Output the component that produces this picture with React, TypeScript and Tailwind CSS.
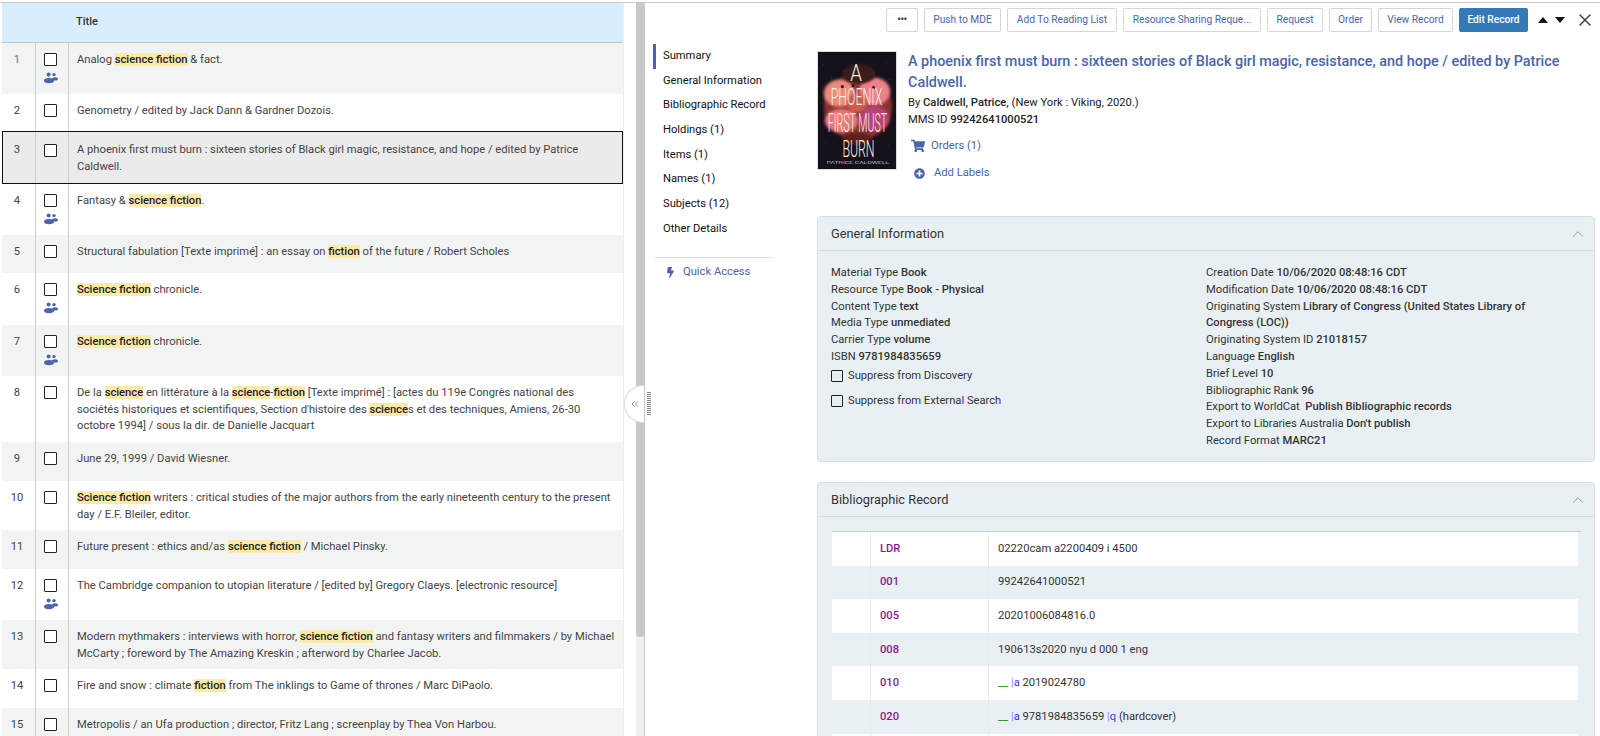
import type { ReactNode } from "react";
import { ChevronUp, ChevronsLeft, X } from "lucide-react";
import { FaBolt, FaPlusCircle, FaShoppingCart } from "react-icons/fa";

function Hl({ children }: { children: ReactNode }) {
  return <span className="bg-[#fbeaa8] font-medium text-[#222]">{children}</span>;
}

function PeopleIcon() {
  return (
    <svg width="14" height="12" viewBox="0 0 14 12" className="text-[#4a65a8]" fill="currentColor">
      <circle cx="4.6" cy="2.6" r="2" />
      <circle cx="10" cy="2.6" r="1.7" />
      <ellipse cx="5" cy="8.6" rx="5" ry="2.7" />
      <ellipse cx="11" cy="6.9" rx="3" ry="1.7" />
    </svg>
  );
}

type Row = { h: string; title: ReactNode; shared?: boolean; selected?: boolean };

const rows: Row[] = [
  { h: "h-[51px]", shared: true, title: <>Analog <Hl>science fiction</Hl> &amp; fact.</> },
  { h: "h-[37px]", title: <>Genometry / edited by Jack Dann &amp; Gardner Dozois.</> },
  { h: "h-[53px]", selected: true, title: <>A phoenix first must burn : sixteen stories of Black girl magic, resistance, and hope / edited by Patrice Caldwell.</> },
  { h: "h-[51px]", shared: true, title: <>Fantasy &amp; <Hl>science fiction</Hl>.</> },
  { h: "h-[38px]", title: <>Structural fabulation [Texte imprimé] : an essay on <Hl>fiction</Hl> of the future / Robert Scholes</> },
  { h: "h-[52px]", shared: true, title: <><Hl>Science fiction</Hl> chronicle.</> },
  { h: "h-[51px]", shared: true, title: <><Hl>Science fiction</Hl> chronicle.</> },
  { h: "h-[66px]", title: <>De la <Hl>science</Hl> en littérature à la <Hl>science</Hl>-<Hl>fiction</Hl> [Texte imprimé] : [actes du 119e Congrès national des sociétés historiques et scientifiques, Section d'histoire des <Hl>science</Hl>s et des techniques, Amiens, 26-30 octobre 1994] / sous la dir. de Danielle Jacquart</> },
  { h: "h-[39px]", title: <>June 29, 1999 / David Wiesner.</> },
  { h: "h-[49px]", title: <><Hl>Science fiction</Hl> writers : critical studies of the major authors from the early nineteenth century to the present day / E.F. Bleiler, editor.</> },
  { h: "h-[39px]", title: <>Future present : ethics and/as <Hl>science fiction</Hl> / Michael Pinsky.</> },
  { h: "h-[51px]", shared: true, title: <>The Cambridge companion to utopian literature / [edited by] Gregory Claeys. [electronic resource]</> },
  { h: "h-[49px]", title: <>Modern mythmakers : interviews with horror, <Hl>science fiction</Hl> and fantasy writers and filmmakers / by Michael McCarty ; foreword by The Amazing Kreskin ; afterword by Charlee Jacob.</> },
  { h: "h-[39px]", title: <>Fire and snow : climate <Hl>fiction</Hl> from The inklings to Game of thrones / Marc DiPaolo.</> },
  { h: "h-[40px]", title: <>Metropolis / an Ufa production ; director, Fritz Lang ; screenplay by Thea Von Harbou.</> },
];

const actions = [
  { label: "Push to MDE", w: "w-[77px]" },
  { label: "Add To Reading List", w: "w-[110px]" },
  { label: "Resource Sharing Reque...", w: "w-[138px]" },
  { label: "Request", w: "w-[56px]" },
  { label: "Order", w: "w-[43px]" },
  { label: "View Record", w: "w-[75px]" },
];

const nav = [
  "Summary",
  "General Information",
  "Bibliographic Record",
  "Holdings (1)",
  "Items (1)",
  "Names (1)",
  "Subjects (12)",
  "Other Details",
];

const generalLeft = [
  ["Material Type", "Book"],
  ["Resource Type", "Book - Physical"],
  ["Content Type", "text"],
  ["Media Type", "unmediated"],
  ["Carrier Type", "volume"],
  ["ISBN", "9781984835659"],
];

const generalRight = [
  ["Creation Date", "10/06/2020 08:48:16 CDT"],
  ["Modification Date", "10/06/2020 08:48:16 CDT"],
  ["Originating System", "Library of Congress (United States Library of Congress (LOC))"],
  ["Originating System ID", "21018157"],
  ["Language", "English"],
  ["Brief Level", "10"],
  ["Bibliographic Rank", "96"],
  ["Export to WorldCat\u00a0", "Publish Bibliographic records"],
  ["Export to Libraries Australia", "Don't publish"],
  ["Record Format", "MARC21"],
];

const Sub = ({ c }: { c: string }) => (
  <span className="text-[#3b3bf0]"><span className="text-[#8d8df5]">|</span>{c}</span>
);

const Ind = () => <span className="text-[#1d8a00]">__</span>;

const marc: { tag: string; value: ReactNode }[] = [
  { tag: "LDR", value: "02220cam a2200409 i 4500" },
  { tag: "001", value: "99242641000521" },
  { tag: "005", value: "20201006084816.0" },
  { tag: "008", value: "190613s2020 nyu d 000 1 eng" },
  { tag: "010", value: <><Ind /> <Sub c="a" /> 2019024780</> },
  { tag: "020", value: <><Ind /> <Sub c="a" /> 9781984835659 <Sub c="q" /> (hardcover)</> },
  { tag: "040", value: "" },
];

function BookCover() {
  return (
    <svg viewBox="0 0 80 119" className="w-[80px] h-[119px] shrink-0 border border-[#ddd] bg-[#14101a]">
      <defs>
        <filter id="soft"><feGaussianBlur stdDeviation="1.8" /></filter>
        <filter id="softer"><feGaussianBlur stdDeviation="1" /></filter>
      </defs>
      <rect width="80" height="119" fill="#15111b" />
      <g fill="#5d5a78">
        <circle cx="6" cy="12" r="0.5" />
        <circle cx="14" cy="26" r="0.5" />
        <circle cx="70" cy="10" r="0.5" />
        <circle cx="74" cy="28" r="0.5" />
        <circle cx="8" cy="92" r="0.5" />
        <circle cx="72" cy="96" r="0.5" />
      </g>
      <ellipse cx="41" cy="56" rx="35" ry="34" fill="#8a3330" filter="url(#soft)" />
      <ellipse cx="22" cy="42" rx="16" ry="14" fill="#f08a78" filter="url(#soft)" />
      <ellipse cx="58" cy="40" rx="16" ry="14" fill="#f0808a" filter="url(#soft)" />
      <ellipse cx="40" cy="52" rx="11" ry="10" fill="#d15a50" filter="url(#soft)" />
      <ellipse cx="24" cy="70" rx="17" ry="12" fill="#e87a78" filter="url(#soft)" />
      <ellipse cx="58" cy="68" rx="15" ry="13" fill="#b8427a" filter="url(#soft)" />
      <ellipse cx="42" cy="22" rx="17" ry="10" fill="#3a1d18" filter="url(#softer)" />
      <ellipse cx="40" cy="88" rx="15" ry="6" fill="#5a2118" filter="url(#soft)" />
      <circle cx="25" cy="35" r="1.6" fill="#1c2030" />
      <circle cx="57" cy="36" r="1.6" fill="#1c2030" />
      <circle cx="36" cy="34" r="1.6" fill="#2a1a20" />
      <g fill="#f8efe9" fontFamily="Roboto, sans-serif" fontWeight="300" textAnchor="middle">
        <text x="39" y="29" fontSize="25" textLength="12" lengthAdjust="spacingAndGlyphs">A</text>
        <text x="39.5" y="54" fontSize="25" textLength="53" lengthAdjust="spacingAndGlyphs">PHOENIX</text>
        <text x="40.5" y="82" fontSize="27" textLength="61" lengthAdjust="spacingAndGlyphs">FIRST MUST</text>
        <text x="41.5" y="107" fontSize="25" textLength="33" lengthAdjust="spacingAndGlyphs">BURN</text>
        <text x="41" y="114.5" fontSize="4.5" textLength="64" lengthAdjust="spacingAndGlyphs">PATRICE CALDWELL</text>
      </g>
    </svg>
  );
}

function ListRow({ row, n }: { row: Row; n: number }) {
  const zebra = n % 2 === 1 ? "bg-[#f2f4f4]" : "bg-white";
  return (
    <div className={`flex shrink-0 text-[11.2px] leading-[16.5px] ${row.h} ${row.selected ? "bg-[#ebebeb] outline-[1.5px] outline-[#111] -outline-offset-[1.5px]" : zebra}`}>
      <div className={`w-[34px] shrink-0 border-r border-[#cfcfcf] text-center pr-[3px] ${row.selected ? "pt-[11px]" : "pt-[9px]"} ${n === 1 ? "text-[#5a7f9a]" : "text-[#444]"}`}>
        {n}
      </div>
      <div className={`w-[33px] shrink-0 border-r border-[#cfcfcf] flex flex-col items-center pr-[3px] ${row.selected ? "pt-[13px]" : "pt-[10px]"}`}>
        <span className="block w-[13px] h-[13px] border border-[#222] rounded-[1px] bg-white" />
        {row.shared && <span className="mt-[6px]"><PeopleIcon /></span>}
      </div>
      <div className={`flex-1 pl-2 pr-2 text-[#444] ${row.selected ? "pt-[11px]" : "pt-[9px]"}`}>{row.title}</div>
    </div>
  );
}

function Panel({ title, children }: { title: string; children: ReactNode }) {
  return (
    <section className="rounded-[4px] border border-[#d7dde0] bg-[#e9f0f3]">
      <header className="h-[34px] flex items-center justify-between px-[13px] border-b border-[#d7dde0] text-[12.8px] text-[#333]">
        {title}
        <ChevronUp size={18} strokeWidth={1} className="text-[#777] mr-[-6px]" />
      </header>
      {children}
    </section>
  );
}

function Field({ label, value }: { label: string; value: string }) {
  return (
    <div>
      {label} <span className="font-[460] text-[#333]">{value}</span>
    </div>
  );
}

function Suppress({ label, className }: { label: string; className: string }) {
  return (
    <div className={`flex items-center gap-[5px] ${className}`}>
      <span className="w-[12px] h-[12px] border border-[#222] rounded-[1px]" />
      {label}
    </div>
  );
}

export default function App() {
  return (
    <div className="relative h-[736px] w-[1600px] overflow-hidden bg-white font-['Roboto',sans-serif]">
      <div className="h-[3px] border-b border-[#c8c8c8]" />
      <div className="flex h-[733px]">
        <div className="ml-[2px] w-[621px] shrink-0 flex flex-col overflow-hidden">
          <div className="h-[40px] shrink-0 bg-[#d9eefc] border-b border-[#c8c8c8] pl-[74px] flex items-center text-[11px] font-medium text-[#333]">
            Title
          </div>
          {rows.map((row, i) => (
            <ListRow key={i} row={row} n={i + 1} />
          ))}
        </div>
        <div className="w-[13px] shrink-0 border-l border-[#eeeeee]" />
        <div className="w-[9px] shrink-0 bg-[#f0f0f0] border-r border-[#c8c8c8] flex flex-col">
          <div className="h-[634px] -mr-px bg-[#c8c8c8] rounded-b-[4px]" />
        </div>

        <div className="flex-1 min-w-0 flex flex-col">
          <div className="h-[29px] shrink-0 pt-[5px] flex items-center justify-end">
            <div className="flex items-center gap-[6px] text-[10.2px] text-[#4a65a8]">
              <button className="w-[32px] h-[24px] rounded-[2px] border border-[#d5d5d5] bg-white text-[#444] font-bold tracking-tighter leading-none">
                •••
              </button>
              {actions.map((a) => (
                <button key={a.label} className={`${a.w} h-[24px] rounded-[2px] border border-[#d5d5d5] bg-white whitespace-nowrap`}>
                  {a.label}
                </button>
              ))}
              <button className="w-[69px] h-[24px] rounded-[2px] bg-[#337ab7] text-white font-medium">Edit Record</button>
            </div>
            <div className="flex items-center gap-[7px] ml-[10px] mr-[10px]">
              <span className="w-0 h-0 border-x-[5px] border-x-transparent border-b-[6px] border-b-[#111]" />
              <span className="w-0 h-0 border-x-[5px] border-x-transparent border-t-[6px] border-t-[#111]" />
            </div>
            <X size={20} strokeWidth={1.8} className="text-[#444] mr-[5px]" />
          </div>

          <div className="flex flex-1 min-h-0">
            <nav className="w-[172px] shrink-0 pl-[8px] pt-[12px] text-[11.2px] text-[#111]">
              {nav.map((item, i) => (
                <div key={item} className={`h-[24.7px] flex items-center pl-[7px] border-l-[3px] ${i === 0 ? "border-[#4a65a8]" : "border-transparent"}`}>
                  {item}
                </div>
              ))}
              <div className="mt-[15.5px] ml-[2px] mr-[45px] border-t border-[#dcdcdc] pt-[3px] flex items-center h-[26px] pl-[10px] text-[#4a65a8]">
                <FaBolt size={11} className="mr-[7px]" />
                Quick Access
              </div>
            </nav>

            <main className="flex-1 min-w-0 pt-[19px] pr-[5px]">
              <div className="flex h-[165px]">
                <BookCover />
                <div className="pl-[11px] min-w-0 text-[11.2px] text-[#222]">
                  <h1 className="text-[14.4px] leading-[21px] font-medium text-[#4a65a8]">
                    A phoenix first must burn : sixteen stories of Black girl magic, resistance, and hope / edited by Patrice Caldwell.
                  </h1>
                  <div className="mt-[1px] leading-[17px]">By <span className="font-[460]">Caldwell, Patrice,</span> (New York : Viking, 2020.)</div>
                  <div className="leading-[17px]">MMS ID <span className="font-[460]">99242641000521</span></div>
                  <div className="mt-[9px] h-[18px] flex items-center pl-[3px] text-[#4a65a8]">
                    <FaShoppingCart size={14} className="mr-[6px]" />
                    Orders (1)
                  </div>
                  <div className="mt-[9px] h-[18px] flex items-center pl-[6px] text-[#4a65a8]">
                    <FaPlusCircle size={11} className="mr-[9px]" />
                    Add Labels
                  </div>
                </div>
              </div>

              <Panel title="General Information">
                <div className="h-[210px] flex pt-[14px] px-[13px] text-[11.2px] leading-[16.8px] text-[#333]">
                  <div className="w-[375px] shrink-0">
                    {generalLeft.map(([l, v]) => (
                      <Field key={l} label={l} value={v} />
                    ))}
                    <Suppress label="Suppress from Discovery" className="mt-[2px] h-[17px]" />
                    <Suppress label="Suppress from External Search" className="mt-[8px] h-[17px]" />
                  </div>
                  <div className="w-[340px]">
                    {generalRight.map(([l, v]) => (
                      <Field key={l} label={l} value={v} />
                    ))}
                  </div>
                </div>
              </Panel>

              <div className="mt-[20px]">
                <Panel title="Bibliographic Record">
                  <div className="pl-[14px] pr-[13px] pt-[14px]">
                    <div className="border-t border-[#b8cde0] text-[11.2px] text-[#333]">
                      {marc.map((m, i) => (
                        <div key={m.tag} className={`h-[33.6px] mr-[3px] flex ${i % 2 === 0 ? "bg-white" : "bg-[#e9f0f3]"}`}>
                          <div className="w-[39px] border-r border-[#e8ecee]" />
                          <div className="w-[118px] border-r border-[#e8ecee] pl-[9px] pt-[1px] flex items-center font-medium text-[#8a1a8a]">{m.tag}</div>
                          <div className="pl-[9px] pt-[1px] flex items-center"><span>{m.value}</span></div>
                        </div>
                      ))}
                    </div>
                  </div>
                </Panel>
              </div>
            </main>
          </div>
        </div>
      </div>

      <div className="absolute left-[624px] top-[385px] w-[20px] h-[38px] rounded-l-full bg-white border border-r-0 border-[#d8d8d8] flex items-center justify-center text-[#777]">
        <ChevronsLeft size={12} strokeWidth={1.5} />
      </div>
      <div className="absolute left-[647px] top-[392px] w-[4px] h-[24px] bg-[repeating-linear-gradient(to_bottom,#8a8a8a_0,#8a8a8a_1px,transparent_1px,transparent_2px)]" />
    </div>
  );
}
